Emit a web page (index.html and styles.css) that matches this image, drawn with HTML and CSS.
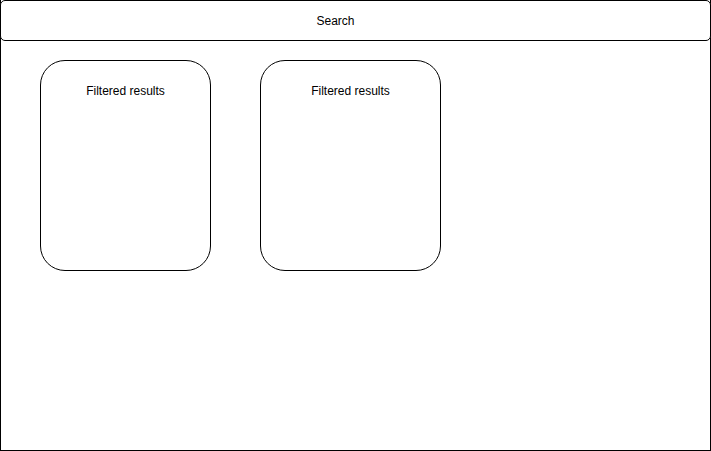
FILE: index.html
```html
<!DOCTYPE html>
<html lang="en">
<head>
  <meta charset="UTF-8">
  <title>Search mockup</title>
  <link rel="stylesheet" href="styles.css">
</head>
<body>
  <div class="frame">
    <div class="search-bar">Search</div>
    <div class="results">
      <div class="card card-narrow">Filtered results</div>
      <div class="card card-wide">Filtered results</div>
    </div>
  </div>
</body>
</html>
```

FILE: styles.css
```css
* {
  margin: 0;
  padding: 0;
  box-sizing: border-box;
}

body {
  font-family: "Liberation Sans", Arial, sans-serif;
  font-size: 12px;
  line-height: 14px;
  color: #000;
  background: #fff;
}

/* Outer window */
.frame {
  width: 711px;
  height: 451px;
  border: 1px solid #000;
  border-top: none;
}

.search-bar {
  height: 41px;
  margin: 0 -1px;
  border: 1px solid #000;
  border-radius: 5px;
  background: #fff;
  display: flex;
  align-items: center;
  justify-content: center;
  padding-right: 40px;
}

/* Result cards */
.results {
  display: flex;
  gap: 49px;
  padding: 19px 0 0 39px;
}

.card {
  height: 211px;
  border: 1px solid #000;
  border-radius: 25px;
  text-align: center;
  padding-top: 23px;
}

.card-narrow {
  width: 171px;
}

.card-wide {
  width: 181px;
}
```
